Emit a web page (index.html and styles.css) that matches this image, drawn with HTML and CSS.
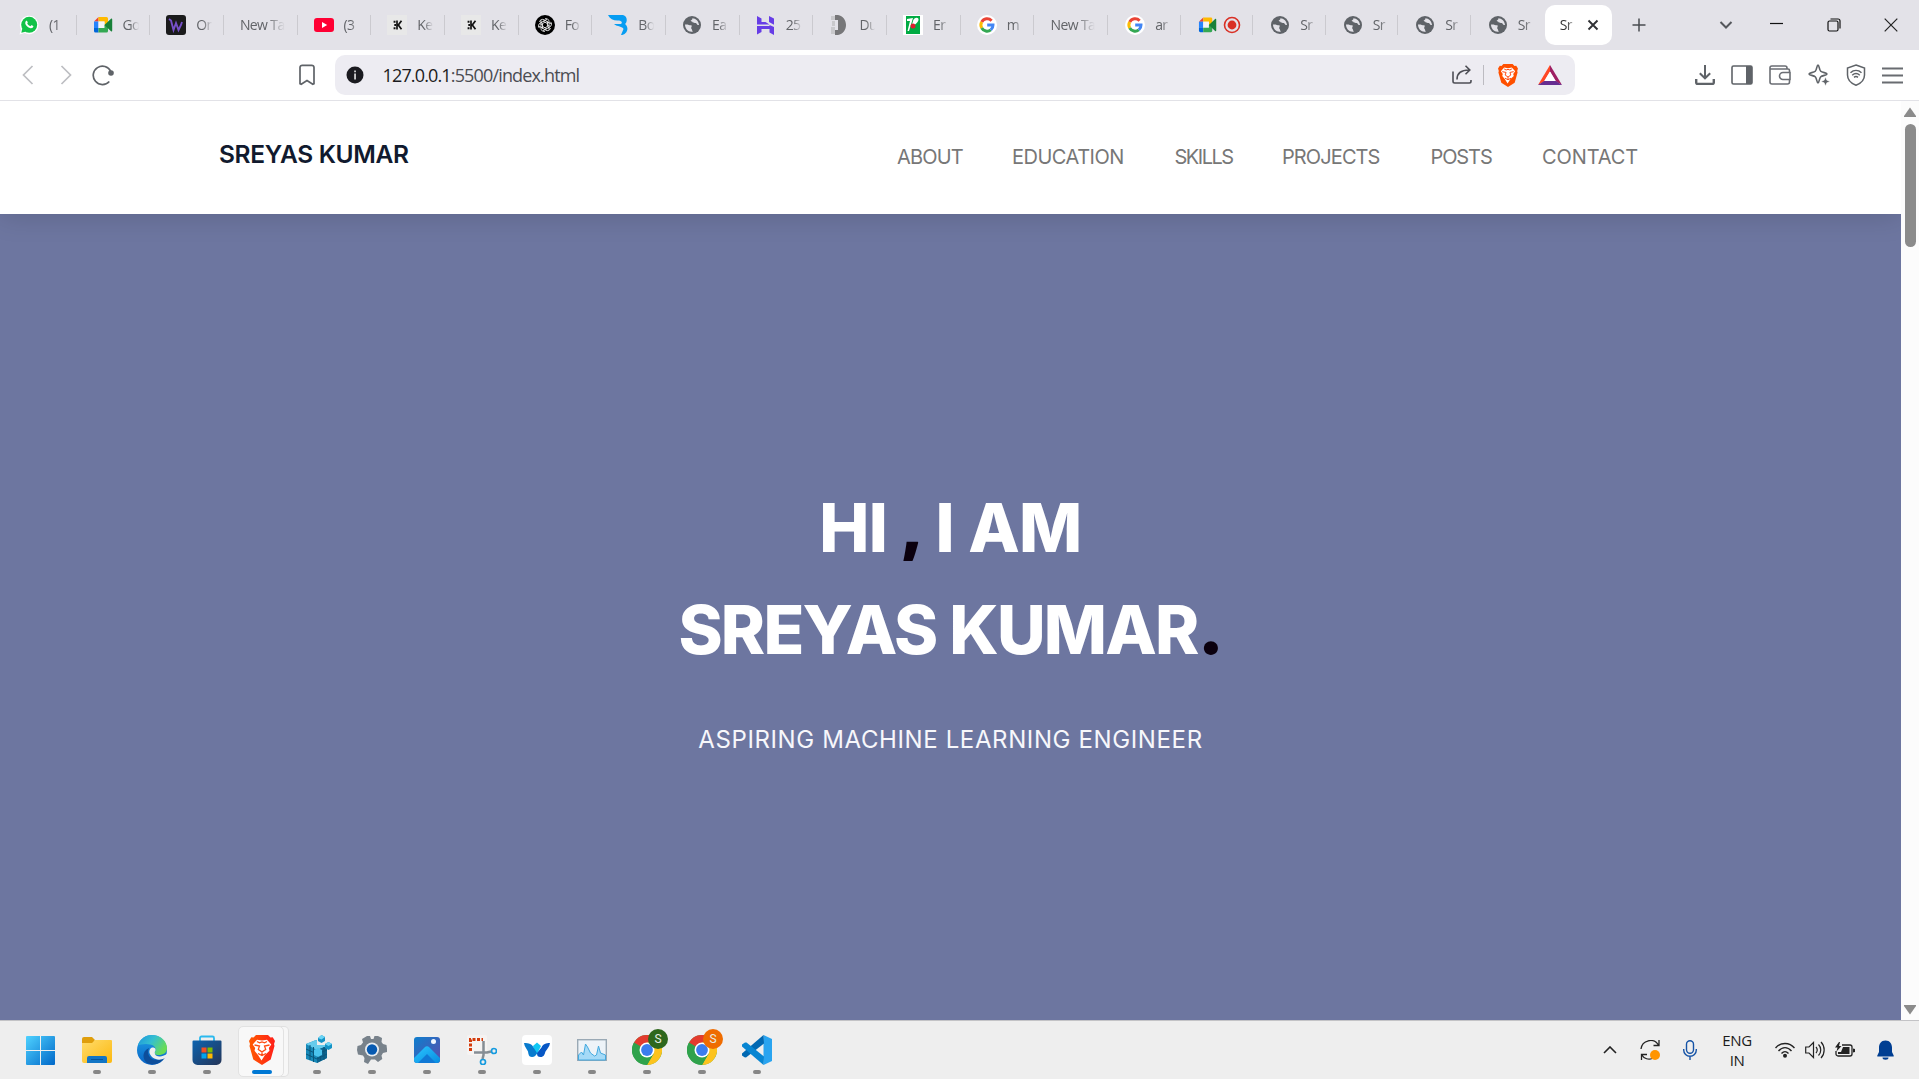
FILE: index.html
```html
<!DOCTYPE html>
<html lang="en">
<head>
<meta charset="utf-8">
<title>Sreyas Kumar</title>
<link rel="stylesheet" href="styles.css">
</head>
<body>
<svg class="defs" width="0" height="0" aria-hidden="true">
  <defs>
    <linearGradient id="g-win" x1="0" y1="0" x2="1" y2="1"><stop offset="0" stop-color="#4fd2ff"/><stop offset="1" stop-color="#0067c8"/></linearGradient>
    <linearGradient id="g-folder" x1="0" y1="0" x2="1" y2="1"><stop offset="0" stop-color="#ffdc6b"/><stop offset="1" stop-color="#fcb80f"/></linearGradient>
    <linearGradient id="g-edge" x1="0" y1="0" x2="1" y2=".5"><stop offset="0" stop-color="#1c94dd"/><stop offset=".5" stop-color="#34bfd0"/><stop offset="1" stop-color="#69dc55"/></linearGradient>
    <linearGradient id="g-edge2" x1="0" y1="0" x2="0" y2="1"><stop offset="0" stop-color="#1fa0e6"/><stop offset="1" stop-color="#0862c4"/></linearGradient>
    <linearGradient id="g-store" x1="0" y1="0" x2="1" y2="1"><stop offset="0" stop-color="#0d64b0"/><stop offset="1" stop-color="#243457"/></linearGradient>
    <linearGradient id="g-brave" x1="0" y1="0" x2="1" y2="0"><stop offset="0" stop-color="#ff5a00"/><stop offset="1" stop-color="#ff1f1a"/></linearGradient>
    <linearGradient id="g-photo" x1="0" y1="0" x2="1" y2="1"><stop offset="0" stop-color="#0d7fce"/><stop offset="1" stop-color="#5d4cab"/></linearGradient>
    <linearGradient id="g-hill" x1="0" y1="0" x2="1" y2="1"><stop offset="0" stop-color="#2bc6ff"/><stop offset="1" stop-color="#078be0"/></linearGradient>
    <symbol id="globe" viewBox="0 0 20 20"><circle cx="10" cy="10" r="9" fill="#5f6368"/><path d="M3 9.5c3.5-.3 4.500 1 6.500.7.6 1.300-.3 2-.4 3 1.200.6.6 2.400 1.800 3.300-4 1-7.900-2.300-7.900-7ZM10.200 3.200c.9 1-.8 1.800-1.600 2.400.2 1 1.900.9 2.200 1.900 1.200-.2 1.700.9 3.200.4 1 .8 1.100 2.200 3 2.200-.2-3.900-3.100-6.800-6.800-6.900Z" fill="#e3e2e8"/></symbol>
    <symbol id="meet" viewBox="0 0 20 20"><path d="M1 6.500 5.500 2v4.500Z" fill="#ea4335"/><path d="M1 6.500h4.500v6.500H1Z" fill="#2684fc"/><path d="M1 13h4.500v4.500H2.500A1.500 1.500 0 0 1 1 16Z" fill="#0066da"/><path d="M5.500 2h8A1.500 1.500 0 0 1 15 3.500V9l-3.500 1V6.500h-6Z" fill="#ffba00"/><path d="M5.500 6.500h6V13h-6Z" fill="#f4f4f8"/><path d="M5.500 13h6v-3L15 8v8a1.500 1.500 0 0 1-1.500 1.500h-8Z" fill="#34a853"/><path d="m11.500 10 6.500-6.200c.5-.5 1.200-.2 1.200.5v11.400c0 .7-.7 1-1.200.5Z" fill="#188038"/></symbol>
    <symbol id="google" viewBox="0 0 20 20"><circle cx="10" cy="10" r="10" fill="#fff"/><g fill="none" stroke-width="3"><path d="M14.600 5.700A6.100 6.100 0 0 0 4.700 7" stroke="#ea4335"/><path d="M4.700 7a6.100 6.100 0 0 0 0 6" stroke="#fbbc05"/><path d="M4.700 13a6.100 6.100 0 0 0 9.100 1.900" stroke="#34a853"/><path d="M13.800 14.900A6.100 6.100 0 0 0 16 10.100h-5.800" stroke="#4285f4"/></g></symbol>
    <symbol id="kite" viewBox="0 0 20 20"><path fill="#e8e8e8" d="M0 0h20v20H0z"/><path d="M10 5.500v9M14.500 5.800 11.300 10l3.200 4.200" fill="none" stroke="#111" stroke-width="1.700"/><path fill="#111" d="M6.600 5.800h1.900v1.900H6.600zM6.600 12.300h1.900v1.900H6.600zM7.300 9.100h1.800v1.800H7.300z"/></symbol>
    <symbol id="lion" viewBox="0 0 26 30"><path d="M7 0h12l2.500 2.600 2.200-.4L26 6l-1 3 .5 2-3.800 13.500L13 30l-8.700-5.500L.5 11 1 9 0 6l2.300-3.800 2.200.4Z"/><path d="m8 4.700 5 .9 5-.9 4.300 4.800-2.500 3.500.7 2.800-4.500 4.200-3.500 5.500-3.500-5.500L5.500 15.800l.7-2.800L3.700 9.500Z" fill="#fff"/><path d="m5.500 10 5 1-1.200 3.400 3.700 2.600 3.700-2.600-1.200-3.400 5-1M9 18.500l4 2 4-2M13 17v3M8 6.500l2.500 1.300L13 7l2.500.8L18 6.500" stroke="#ff4b13" stroke-width="1.300" fill="none"/></symbol>
    <symbol id="chrome" viewBox="0 0 30 30"><circle cx="15" cy="15" r="15" fill="#2fa24b"/><path d="M15 15 2 7.500A15 15 0 0 1 28 7.500H15Z" fill="#e33b2e"/><path d="M15 7.500h13A15 15 0 0 1 15 30l6.500-11.200Z" fill="#fcc31e"/><path d="M2 7.500A15 15 0 0 0 15 30l6.500-11.200H8.500Z" fill="#2fa24b"/><circle cx="15" cy="15" r="7.500" fill="#fff"/><circle cx="15" cy="15" r="5.900" fill="#3b7ded"/></symbol>
  </defs>
</svg>

<div class="tabbar">
  <div class="tab tab-first"><svg class="fav" viewBox="0 0 20 20"><path d="M.5 19.500 2 14.500a9.300 9.300 0 1 1 3.600 3.600Z" fill="#fff"/><circle cx="10.200" cy="9.800" r="8" fill="#12c248"/><path d="m2.300 17.700 1-4.200 3.200 3.200Z" fill="#12c248"/><path d="M7.200 5.800c.7-.4 1 0 1.600 1.700-.2.6-.6.8-.6 1.100.9 1.500 1.900 2.200 3.200 2.700l.9-1.100c.4-.2 1.700.6 2.100.9-.1 1.700-1.500 2.300-2.800 2.100-2.800-.6-5.200-3-5.400-4.900 0-1 .4-1.900 1-2.500Z" fill="#fff"/></svg><span class="tab-title">(1</span></div>
  <div class="tab"><svg class="fav"><use href="#meet"/></svg><span class="tab-title">Go</span></div>
  <div class="tab"><svg class="fav" viewBox="0 0 20 20"><rect width="20" height="20" rx="3" fill="#1b1b1c"/><path d="m3 4 2 1.500L7.500 15 10 8l2.500 7L15 10l1-3" fill="none" stroke="#7650c9" stroke-width="1.900"/></svg><span class="tab-title">On</span></div>
  <div class="tab"><span class="tab-title tab-title-long">New Ta</span></div>
  <div class="tab"><svg class="fav" viewBox="0 0 20 20"><rect y="3" width="20" height="14" rx="3" fill="#ff0033"/><path d="m8 7 5.200 3L8 13Z" fill="#fff"/></svg><span class="tab-title">(3</span></div>
  <div class="tab"><svg class="fav"><use href="#kite"/></svg><span class="tab-title">Ke</span></div>
  <div class="tab"><svg class="fav"><use href="#kite"/></svg><span class="tab-title">Ke</span></div>
  <div class="tab"><svg class="fav" viewBox="0 0 20 20"><circle cx="10" cy="10" r="10"/><g fill="none" stroke="#fff" stroke-width=".8"><path id="knot" d="M10 3.700a3 3 0 0 1 4 2.800v4l-3.800 2.200M8 6.500l4-2.200"/><use href="#knot" transform="rotate(60 10 10)"/><use href="#knot" transform="rotate(120 10 10)"/><use href="#knot" transform="rotate(180 10 10)"/><use href="#knot" transform="rotate(240 10 10)"/><use href="#knot" transform="rotate(300 10 10)"/></g></svg><span class="tab-title">Fo</span></div>
  <div class="tab"><svg class="fav" viewBox="0 0 20 20"><path d="M0 0h15c4 1 5 6 2 9 5 4 1.500 11-4 11l2.500-6c-1-3-6-2-9.500-5h7c2-2 0-3-2-3.500C6 6 2 4 0 0Z" fill="#079df2"/></svg><span class="tab-title">Bo</span></div>
  <div class="tab"><svg class="fav"><use href="#globe"/></svg><span class="tab-title">Ea</span></div>
  <div class="tab"><svg class="fav" viewBox="0 0 20 20"><path d="m1 1 4.500 2.500V7h4l4 2.500H1ZM13 1l5 2.500v6.300L13 7ZM1 11h12.500v-1L18 12v8l-4.500-2.500V14H5.500v3L1 19.500Z" fill="#673de6"/></svg><span class="tab-title">25</span></div>
  <div class="tab"><svg class="fav" viewBox="0 0 20 20"><path d="M2 1h4v4H2zM3 6h3v5H3zM2 12h4v7H2z" fill="#c9c9cc"/><path d="M6 0h3c5 1 8 5 8 10s-3 9-8 10H6V15h3V5H6Z" fill="#777779"/></svg><span class="tab-title">Du</span></div>
  <div class="tab"><svg class="fav" viewBox="0 0 20 20"><path d="M0 0h20v20H0z" fill="#fff"/><path d="M3 1h14v18H3z" fill="#00ab43"/><path d="m4 4 6-1-4 13H4.500L7 6H4ZM10 6c1-4 6-4 5.500-1C15 8 11 10 8 13Z" fill="#fff"/><circle cx="10" cy="11" r="2.500" fill="#dc1f31"/></svg><span class="tab-title">Er</span></div>
  <div class="tab"><svg class="fav"><use href="#google"/></svg><span class="tab-title">m</span></div>
  <div class="tab"><span class="tab-title tab-title-long">New Ta</span></div>
  <div class="tab tab-narrow"><svg class="fav"><use href="#google"/></svg><span class="tab-title">ar</span></div>
  <div class="tab tab-narrow tab-rec"><svg class="fav"><use href="#meet"/></svg><svg class="rec" viewBox="0 0 18 18"><circle cx="9" cy="9" r="7.500" fill="none" stroke="#d93025" stroke-width="1.600"/><circle cx="9" cy="9" r="4.400" fill="#d93025"/></svg></div>
  <div class="tab tab-narrow"><svg class="fav"><use href="#globe"/></svg><span class="tab-title">Sr</span></div>
  <div class="tab tab-narrow"><svg class="fav"><use href="#globe"/></svg><span class="tab-title">Sr</span></div>
  <div class="tab tab-narrow"><svg class="fav"><use href="#globe"/></svg><span class="tab-title">Sr</span></div>
  <div class="tab tab-last"><svg class="fav"><use href="#globe"/></svg><span class="tab-title">Sr</span></div>
  <div class="tab-active"><span class="tab-title">Sr</span><svg width="12" height="12" viewBox="0 0 12 12"><path d="m1.500 1.500 9 9m0-9-9 9" stroke="#303135" stroke-width="1.900"/></svg></div>
  <div class="new-tab"><svg width="14" height="14" viewBox="0 0 14 14"><path d="M7 .5v13M.5 7h13" stroke="#4a4c50" stroke-width="1.500"/></svg></div>
  <div class="window-controls">
    <svg width="14" height="10" viewBox="0 0 14 10"><path d="m1.500 2 5.500 5.500L12.500 2" fill="none" stroke="#55575c" stroke-width="2"/></svg>
    <svg width="13" height="14" viewBox="0 0 13 14"><path d="M0 5.500h13" stroke="#111" stroke-width="1.200"/></svg>
    <svg width="14" height="14" viewBox="0 0 14 14"><rect x="1" y="3" width="10" height="10" rx="1.500" fill="none" stroke="#111" stroke-width="1.200"/><path d="M3.500 1H11a2 2 0 0 1 2 2v7.500" fill="none" stroke="#111" stroke-width="1.200"/></svg>
    <svg width="14" height="14" viewBox="0 0 14 14"><path d="m.7.700 12.600 12.600m0-12.600L.7 13.300" stroke="#222" stroke-width="1.200"/></svg>
  </div>
</div>

<div class="toolbar">
  <div class="nav-buttons">
    <svg width="12" height="20" viewBox="0 0 12 20"><path d="M10.500 1 1.500 10l9 9" fill="none" stroke="#bdbec2" stroke-width="1.700"/></svg>
    <svg width="12" height="20" viewBox="0 0 12 20"><path d="m1.500 1 9 9-9 9" fill="none" stroke="#bdbec2" stroke-width="1.700"/></svg>
    <svg width="22" height="22" viewBox="0 0 22 22"><path d="M17.300 17.500A9.200 9.200 0 1 1 18.800 7.500" fill="none" stroke="#5f6368" stroke-width="1.700"/><circle cx="19" cy="9" r="2.800" fill="#5f6368"/></svg>
  </div>
  <svg class="bookmark" width="16" height="22" viewBox="0 0 16 22"><path d="M1 3.500a2.200 2.200 0 0 1 2.200-2.200h9.600A2.200 2.200 0 0 1 15 3.500v16.300l-1.200.5L8 16.600l-5.800 3.700-1.200-.5Z" fill="none" stroke="#5f6368" stroke-width="1.700"/></svg>
  <div class="address">
    <svg width="18" height="18" viewBox="0 0 18 18"><circle cx="9" cy="9" r="8.500" fill="#1b1b20"/><path d="M8.200 4.500h1.700v1.800H8.200zM8.200 7.500h1.700v6H8.200z" fill="#ddd"/></svg>
    <span class="url"><b>127.0.0.1</b>:5500/index.html</span>
    <div class="address-actions">
      <svg width="20" height="20" viewBox="0 0 20 20"><path d="M1 6.500v9.800A1.700 1.700 0 0 0 2.700 18h14.600a1.700 1.700 0 0 0 1.700-1.700V15M5 14.500C5 8.500 9 5 17 5M13.500.8 17.800 5l-4.300 4.300" fill="none" stroke="#4d4e55" stroke-width="1.600"/></svg>
      <i class="address-rule"></i>
      <svg width="20" height="23" fill="#ff5000"><use href="#lion"/></svg>
      <svg width="24" height="20" viewBox="0 0 24 20"><path d="M12 0 0 20l6.200-3.500 5.800-10Z" fill="#ff4724"/><path d="m12 0 12 20-6.200-3.500L12 6.500Z" fill="#9e1f63"/><path d="M0 20h24l-6.200-4H6.200Z" fill="#662d91"/><path d="m12 6.500 5.800 9.500H6.200Z" fill="#fff"/></svg>
    </div>
  </div>
  <div class="tools">
    <svg width="20" height="20" viewBox="0 0 20 20"><path d="M10 0v13M4.800 8.200 10 13.300l5.200-5.100" fill="none" stroke="#5f6368" stroke-width="2"/><path d="M1.200 14v3.500a1.500 1.500 0 0 0 1.500 1.500h14.600a1.500 1.500 0 0 0 1.500-1.500V14" fill="none" stroke="#5f6368" stroke-width="2.400"/></svg>
    <svg width="22" height="20" viewBox="0 0 22 20"><rect x="1" y="1" width="20" height="18" rx="1.500" fill="none" stroke="#5f6368" stroke-width="1.600"/><path d="M15 1h6v18h-6z" fill="#5f6368"/></svg>
    <svg width="22" height="20" viewBox="0 0 22 20"><path d="M20.500 7V5.500A1.500 1.500 0 0 0 19 4H1V2.800A1.800 1.800 0 0 1 2.800 1H16a2 2 0 0 1 2 2v1M1 3v14a2 2 0 0 0 2 2h15.500a2 2 0 0 0 2-2v-2M21 7.500h-7a3.500 3.500 0 0 0 0 7h7Z" fill="none" stroke="#6b6e74" stroke-width="1.600"/></svg>
    <svg width="22" height="22" viewBox="0 0 22 22"><path d="M10 1c1.200 0 1.200 4.800 2.700 6.200C14.200 8.700 19 8.700 19 10s-4.800 1.300-6.300 2.800C11.200 14.200 11.200 19 10 19s-1.200-4.800-2.700-6.200C5.800 11.300 1 11.300 1 10s4.800-1.300 6.300-2.800C8.800 5.800 8.800 1 10 1Z" fill="#fff" stroke="#5f6368" stroke-width="1.600"/><path d="m17.500 13 1.300 3.200 3.200 1.300-3.200 1.300-1.300 3.200-1.300-3.200-3.200-1.300 3.200-1.300Z" fill="#5f6368" stroke="#fff" stroke-width=".5"/></svg>
    <svg width="20" height="22" viewBox="0 0 20 22"><path d="m10 1 8.500 3v7c0 5-4 8.500-8.500 10.200C5.500 19.500 1.500 16 1.500 11V4Z" fill="none" stroke="#5f6368" stroke-width="1.500"/><path d="M4.500 8.800c3.300-3 7.700-3 11 0M6.200 11.200c2.300-2 5.300-2 7.600 0M8 13.400c1.200-1 2.800-1 4 0" fill="none" stroke="#5f6368" stroke-width="1.500"/></svg>
    <svg width="21" height="18" viewBox="0 0 21 18"><path d="M0 2.500h21M0 9.500h21M0 16.500h21" stroke="#696c71" stroke-width="1.800"/></svg>
  </div>
</div>

<div class="viewport">
  <div class="page">
    <header class="site-header">
      <div class="logo">SREYAS KUMAR</div>
      <nav class="site-nav">
        <a class="nav-about">ABOUT</a><a class="nav-education">EDUCATION</a><a class="nav-skills">SKILLS</a><a class="nav-projects">PROJECTS</a><a class="nav-posts">POSTS</a><a class="nav-contact">CONTACT</a>
      </nav>
    </header>
    <main class="hero">
      <h1 class="hero-title"><span class="line line-hi">HI <span class="comma">,</span> I AM</span><span class="line line-name">SREYAS KUMAR<span class="dot">.</span></span></h1>
      <p class="hero-sub">ASPIRING MACHINE LEARNING ENGINEER</p>
    </main>
  </div>
  <div class="scrollbar">
    <svg width="12" height="10" viewBox="0 0 12 10"><path d="M6 .5 12 9v1H0V9Z" fill="#8b8b8b"/></svg>
    <i class="thumb"></i>
    <svg class="down" width="12" height="10" viewBox="0 0 12 10"><path d="M6 9.500 12 1V0H0v1Z" fill="#8b8b8b"/></svg>
  </div>
</div>

<footer class="taskbar">
  <div class="apps">
    <div class="app app-start"><svg width="29" height="29" viewBox="0 0 29 29"><path d="M1 0h13v14H0V1a1 1 0 0 1 1-1ZM15 0h13a1 1 0 0 1 1 1v13H15ZM0 15h14v14H1a1 1 0 0 1-1-1ZM15 15h14v13a1 1 0 0 1-1 1H15Z" fill="url(#g-win)"/></svg></div>
    <div class="app running"><svg width="30" height="28" viewBox="0 0 30 28"><path d="M0 3a2 2 0 0 1 2-2h8l3 3-3 5H0Z" fill="#df9e0c"/><path d="M0 7h10l3-3h16a1 1 0 0 1 1 1v20a2 2 0 0 1-2 2H2a2 2 0 0 1-2-2Z" fill="url(#g-folder)"/><path d="M5 27v-5a2 2 0 0 1 2-2h16a2 2 0 0 1 2 2v5Z" fill="#1275c5"/><path d="M9 23.500h12" stroke="#07549b"/></svg></div>
    <div class="app running"><svg width="30" height="30" viewBox="0 0 30 30"><circle cx="15" cy="15" r="15" fill="url(#g-edge2)"/><path d="M1 10C4 2 11-.5 17 .2 25 1 30 7 30 13c0 5-4 7-8 7-3 0-5-1-4-3 2-4-1-7-5-7.500C8 8 3 10 1 10Z" fill="url(#g-edge)"/><path d="M12 13c-3 7 2 13 9 12 3-.3 5-1.500 7-3-4 7-12 9-18 6-5-4-5-12 2-15Z" fill="#0d4e9b"/><path d="M18.500 15.500c-1.200 1.800-1 3.500.5 5 3 1.500 6.500 1.300 11-1.500v2l-2 2c-7 4-14 0-15.500-5-.5-3 1-6 4-5.500 1.700.3 2.300 1.500 2 3Z" fill="#eee"/></svg></div>
    <div class="app running"><svg width="30" height="30" viewBox="0 0 30 30"><path d="M8 6V3a1.500 1.500 0 0 1 1.500-1.500h11A1.500 1.500 0 0 1 22 3v3" fill="none" stroke="#2bb9ee" stroke-width="1.800"/><path d="M.5 6.500a1 1 0 0 1 1-1h27a1 1 0 0 1 1 1V25a5 5 0 0 1-5 5h-19a5 5 0 0 1-5-5Z" fill="url(#g-store)"/><path d="M9.500 12.500h5v5h-5z" fill="#f25022"/><path d="M15.500 12.500h5v5h-5z" fill="#7fba00"/><path d="M9.500 18.500h5v5h-5z" fill="#00a4ef"/><path d="M15.500 18.500h5v5h-5z" fill="#ffb900"/></svg></div>
    <div class="app running current"><svg width="26" height="30" fill="url(#g-brave)"><use href="#lion"/></svg></div>
    <div class="app running registry"><svg width="26" height="28" viewBox="0 0 26 28"><path d="m0 9 10-4 11 6v12l-10 5L0 24Z" fill="#1789b8"/><path d="m0 9 10-4 11 6-10 4Z" fill="#65cbed"/><path d="M11 15v13l10-5V11Z" fill="#0d648f"/><path d="M0 14l11 5 10-4M0 19l11 5 10-5M4 10v15M7.500 12v15M14.500 14v12M18 12v13" stroke="#0a567b" fill="none"/><path d="m8 15 4-2 4 2v5l-4 2-4-2Z" fill="#4bc4ee"/><path d="M11 3.500h9V10h-9Z" fill="#eee"/><path d="m12 3 3.500-3L19 2v4l-3.500 2L12 6ZM19 9l3.500-2L26 9v4l-3.500 2-3.500-2Z" fill="#1492c5"/><path d="m12 3 3.500-3L19 2l-3.500 2.500ZM19 9l3.500-2L26 9l-3.500 2Z" fill="#6bd5f6"/></svg></div>
    <div class="app running"><svg width="30" height="30" viewBox="0 0 30 30"><path d="M10 1h3l1 3h2.500l1-3H21l4 2-.500 4 1.500 2 3.500 1 .5 4v3l-4 1-1.500 2.500.8 3.500-4.300 3-3-2.500h-4L11 29l-4-2 .5-4L6 20.500l-5-1L0 15l.5-4L4 10l2-2.500L5 4Z" fill="#78828b"/><circle cx="15" cy="14.500" r="7" fill="#e9edf1"/><circle cx="15" cy="14.500" r="5.200" fill="#075ab1"/></svg></div>
    <div class="app running"><svg width="26" height="26" viewBox="0 0 26 26"><rect width="26" height="26" rx="3" fill="url(#g-photo)"/><path d="M0 21 10.500 10.500a3.500 3.500 0 0 1 5 0L26 21v2a3 3 0 0 1-3 3H3a3 3 0 0 1-3-3Z" fill="url(#g-hill)"/><path d="m4 26 9-9 9 9Z" fill="#1078d5"/><circle cx="19.500" cy="4.500" r="2.500" fill="#eff6ff"/></svg></div>
    <div class="app running"><svg width="30" height="30" viewBox="0 0 30 30"><rect width="20" height="20" rx="2" fill="#f5f3f2"/><path d="M3.500 16V4.500H16" fill="none" stroke="#d43b0b" stroke-width="3" stroke-dasharray="3 1.500"/><path d="M16.500 6v14l-1 4M7 17.500h13l4-1" fill="none" stroke="#858d94" stroke-width="2.500"/><circle cx="27" cy="16" r="2.500" fill="none" stroke="#169bdf" stroke-width="1.700"/><circle cx="16" cy="27" r="2.500" fill="none" stroke="#169bdf" stroke-width="1.700"/></svg></div>
    <div class="app running"><svg width="30" height="30" viewBox="0 0 30 30"><rect width="30" height="30" rx="4" fill="#fff"/><path d="M11 11l4-3.500 4 3.500-4 8-2.500 1Z" fill="#10c7f4"/><path d="M2 8c5 0 8 1 9.500 4.500L15 18c-1 2.500-2.500 4-5 4-3.500 0-3.500-3-4-5.500C5 14 2.500 12 2 8Z" fill="#087bce"/><path d="M28 8c-4 0-7 1-8.500 4.500L15 18c0 3 1 4 3.500 4 3.500 0 4-2.500 5-5.500 1.500-2.500 4-4.500 4.500-8.500Z" fill="#0757c5"/></svg></div>
    <div class="app running"><svg width="30" height="22" viewBox="0 0 30 22"><rect x=".7" y=".7" width="28.600" height="20.600" fill="#edf3f8" stroke="#9aa9b5" stroke-width="1.400"/><path d="m1.500 16 3-3 2 3 2-11 2 3 3 6 4 3 2-1 2-9 2 7 5 2v5H1.500Z" fill="#a5daf7" stroke="#43a9df"/></svg></div>
    <div class="app running"><svg width="30" height="30"><use href="#chrome"/></svg><span class="profile green">S</span></div>
    <div class="app running"><svg width="30" height="30"><use href="#chrome"/></svg><span class="profile orange">S</span></div>
    <div class="app running"><svg width="30" height="30" viewBox="0 0 30 30"><path d="M21.500 0 30 4v22l-8.500 4Z" fill="#29a4f0"/><path d="m21.500 0 .5 8.500L4 22.500l-1.500-.2L0 20.500v-2Z" fill="#0168b2"/><path d="m0 11.500 0-2L3 7.500h1.500L22 21.500 21.500 30Z" fill="#0785d2"/></svg></div>
  </div>
  <div class="tray">
    <div class="tray-cell"><svg width="14" height="8" viewBox="0 0 14 8"><path d="m1 7 6-6 6 6" fill="none" stroke="#222" stroke-width="1.600"/></svg></div>
    <div class="tray-cell"><svg width="20" height="20" viewBox="0 0 20 20"><path d="M1 9A9.500 9.500 0 0 1 18.500 5M19 0v5.500h-5.500M1.500 20v-5.500H7M1.500 14.500C4 19 9 20 12 18.500" fill="none" stroke="#222" stroke-width="1.300"/><circle cx="15" cy="15" r="5" fill="#ff9500"/></svg></div>
    <div class="tray-cell"><svg width="14" height="20" viewBox="0 0 14 20"><rect x="3.500" y=".7" width="7" height="12.600" rx="3.500" fill="none" stroke="#1553a6" stroke-width="1.400"/><path d="M.7 9v1a6.300 6.300 0 0 0 12.600 0V9M7 16.500V20" fill="none" stroke="#1553a6" stroke-width="1.400"/></svg></div>
    <div class="lang"><span>ENG</span><span>IN</span></div>
    <div class="tray-small"><svg width="20" height="16" viewBox="0 0 20 16"><path d="M.5 6c5-6 14-6 19 0M3.500 9c4-4.500 9-4.500 13 0M6.500 11.500c2.300-2.500 4.700-2.500 7 0" fill="none" stroke="#222" stroke-width="1.400"/><circle cx="10" cy="13.700" r="2" fill="#222"/></svg></div>
    <div class="tray-small"><svg width="20" height="18" viewBox="0 0 20 18"><path d="M.7 6v6H4l4.500 4.500v-15L4 6ZM11 6c1.500 1.800 1.500 4.200 0 6M13.500 3.500c3 3 3 8 0 11M16 1c4.200 4.300 4.200 11.700 0 16" fill="none" stroke="#222" stroke-width="1.200"/></svg></div>
    <div class="tray-small"><svg width="20" height="16" viewBox="0 0 20 16"><path d="M7 3h8a2 2 0 0 1 2 2v7a2 2 0 0 1-2 2H3a2 2 0 0 1-2-2V9" fill="none" stroke="#222" stroke-width="1.300"/><path d="M8 5h6.500v7H3v-2h3ZM18 6.500l2 .5v3l-2 .5ZM4 0 0 5.500h2.500L1.500 9.500 6.500 4H4L5 0Z" fill="#222"/></svg></div>
    <div class="tray-bell"><svg width="17" height="20" viewBox="0 0 17 20"><path d="M8.500.5C4 .5 2 4 2 7.500V12L.3 15.500v1h16.400v-1L15 12V7.500C15 4 13 .5 8.500.5ZM5.500 17.500h6a3 2.200 0 0 1-6 0Z" fill="#003e92"/></svg></div>
  </div>
</footer>
</body>
</html>
```
FILE: styles.css
```css
* { box-sizing: border-box; }

body {
  margin: 0;
  width: 1919px;
  height: 1079px;
  overflow: hidden;
  display: flex;
  flex-direction: column;
  background: #fff;
  font-family: "Open Sans", "Noto Sans", sans-serif;
}

svg { display: block; flex: none; }
.defs { position: absolute; }

/* Browser tabs */
.tabbar { display: flex; flex: none; height: 50px; background: #e3e2e8; }
.tab {
  display: flex;
  align-items: center;
  flex: none;
  width: 73.7px;
  padding-left: 16px;
  gap: 10px;
  background: linear-gradient(#cbcacf, #cbcacf) right 15px / 1px 20px no-repeat;
}
.tab-first { width: 76.500px; padding-left: 19px; }
.tab-narrow { width: 72.500px; padding-left: 17px; }
.tab-rec { gap: 6px; }
.tab-rec .fav { width: 19px; }
.tab-last { width: 74px; padding-left: 17px; background: none; }
.fav { width: 20px; height: 20px; }
.rec { width: 18px; height: 18px; }
.tab-title {
  width: 17px;
  white-space: nowrap;
  font-size: 14px;
  line-height: 20px;
  letter-spacing: -.6px;
  color: #626468;
  -webkit-mask-image: linear-gradient(90deg, #000 40%, transparent 95%);
  mask-image: linear-gradient(90deg, #000 40%, transparent 95%);
}
.tab-title-long {
  width: 45px;
  -webkit-mask-image: linear-gradient(90deg, #000 60%, transparent);
  mask-image: linear-gradient(90deg, #000 60%, transparent);
}
.tab-active {
  display: flex;
  align-items: center;
  flex: none;
  width: 67.500px;
  height: 40px;
  margin-top: 5px;
  padding-left: 15px;
  gap: 10px;
  border-radius: 10px;
  background: #fff;
}
.tab-active .tab-title { color: #333; }
.new-tab { display: flex; align-items: center; padding-left: 19.500px; }
.window-controls {
  display: flex;
  align-items: center;
  gap: 43.500px;
  margin-left: auto;
  padding-right: 21px;
}
.window-controls svg:first-child { margin-right: -6px; }

/* Toolbar */
.toolbar {
  display: flex;
  align-items: center;
  flex: none;
  height: 51px;
  border-bottom: 1px solid #e2e2e7;
}
.nav-buttons { display: flex; align-items: center; gap: 26px; padding-left: 21.500px; width: 298.500px; }
.nav-buttons svg:last-child { margin-left: -6px; }
.address {
  display: flex;
  align-items: center;
  width: 1240px;
  height: 40px;
  margin-left: 20.500px;
  padding: 0 13px 0 11px;
  border-radius: 10px;
  background: #edecf2;
}
.url { margin-left: 18.500px; font-size: 18px; letter-spacing: -.85px; line-height: 24px; color: #4b4c52; }
.url b { font-weight: 400; color: #1b1b20; }
.address-actions { display: flex; align-items: center; margin-left: auto; }
.address-rule { width: 1px; height: 20px; margin: 0 14px 0 11px; background: #bcbbc1; }
.address-actions svg:last-child { margin-left: 20px; }
.tools { display: flex; align-items: center; gap: 16.200px; margin-left: auto; padding-right: 16px; }

/* Web page */
.viewport { display: flex; flex: none; height: 919px; }
.page { display: flex; flex-direction: column; width: 1901px; overflow: hidden; }
.site-header {
  position: relative;
  display: flex;
  justify-content: space-between;
  flex: none;
  height: 113px;
  padding: 0 263px 0 219px;
  background: #fff;
  box-shadow: 0 4px 25px rgba(0, 0, 0, .13);
  font-family: Inter, sans-serif;
}
.logo { padding-top: 37px; font-size: 24.500px; line-height: 32px; font-weight: 600; letter-spacing: -.33px; color: #111a2e; }
.site-nav {
  display: flex;
  gap: 50px;
  padding-top: 42px;
  font-size: 20px;
  line-height: 28px;
  color: #777;
}
.site-nav a { white-space: nowrap; }
.nav-about { width: 65px; letter-spacing: -.8px; }
.nav-education { width: 112.500px; letter-spacing: -.5px; }
.nav-skills { width: 57.500px; letter-spacing: -1.500px; }
.nav-projects { width: 98.500px; letter-spacing: -.9px; }
.nav-posts { width: 61.500px; letter-spacing: -1.100px; }
.nav-contact { width: 96px; letter-spacing: -.1px; }
.hero {
  display: flex;
  flex-direction: column;
  align-items: center;
  flex: 1;
  padding-top: 261px;
  background: #6d76a0;
  font-family: Inter, sans-serif;
  color: #fff;
}
.hero-title { display: flex; flex-direction: column; align-items: center; margin: 0; font-size: 67px; line-height: 102px; font-weight: 800; }
.line { white-space: nowrap; }
.line-hi { letter-spacing: -.6px; }
.line-name { letter-spacing: -1.800px; }
.comma { font-family: "Open Sans", sans-serif; color: #0b000e; }
.dot { color: #0b000e; font-size: 76px; line-height: 1; }
.hero-sub { margin: 41px 0 0; font-size: 24px; line-height: 36px; letter-spacing: .62px; color: #f7f7fb; }
.scrollbar {
  display: flex;
  flex-direction: column;
  align-items: center;
  width: 18px;
  padding: 6px 0 5px;
  background: #fcfcfc;
}
.thumb { width: 11px; height: 123px; margin-top: 7px; border-radius: 6px; background: #8b8b8b; }
.down { margin-top: auto; }

/* Taskbar */
.taskbar {
  display: flex;
  justify-content: space-between;
  flex: none;
  height: 59px;
  border-top: 1px solid #c3c3c6;
  background: #eee;
}
.apps { display: flex; padding-left: 13px; }
.app { position: relative; display: flex; align-items: center; justify-content: center; width: 55px; }
.app-start { margin-right: 1.500px; }
.running::after {
  content: "";
  position: absolute;
  bottom: 5px;
  left: 23.500px;
  width: 8px;
  height: 4px;
  border-radius: 2px;
  background: #868686;
}
.current::before {
  content: "";
  position: absolute;
  top: 5px;
  left: 3.500px;
  width: 44px;
  height: 49px;
  border: 1px solid #e2e2e2;
  border-radius: 5px;
  background: #f8f8f8;
  box-shadow: 5px 0 0 -1px #f7f7f7, 5px 0 0 0 #e0e0e0;
}
.current svg { position: relative; }
.current::after { left: 17.500px; width: 20px; background: #0078d4; }
.registry svg { margin: 0 0 2px 3px; }
.profile {
  position: absolute;
  top: 8px;
  left: 28.500px;
  width: 20px;
  height: 20px;
  border-radius: 50%;
  font: 12px/20px Roboto, sans-serif;
  text-align: center;
  color: #e8eee5;
}
.green { background: #2e671c; }
.orange { background: #ef6c00; }
.tray { display: flex; align-items: center; padding-right: 9px; }
.tray-cell { display: flex; justify-content: center; width: 40px; }
.lang {
  display: flex;
  flex-direction: column;
  align-items: center;
  width: 54px;
  margin-right: 6px;
  font-size: 15px;
  line-height: 20px;
  letter-spacing: -.4px;
  color: #1c1c1c;
}
.tray-small { display: flex; justify-content: center; width: 30px; }
.tray-bell { display: flex; justify-content: center; width: 50px; }
```
